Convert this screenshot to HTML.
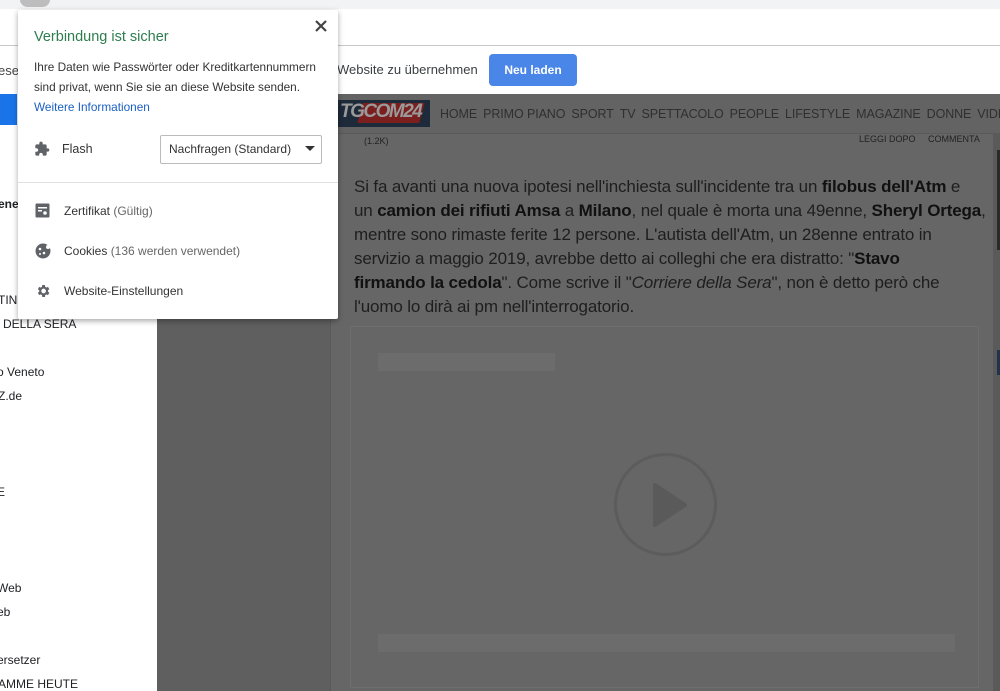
<!DOCTYPE html>
<html><head><meta charset="utf-8"><style>
*{margin:0;padding:0;box-sizing:border-box}
body{width:1000px;height:691px;overflow:hidden;position:relative;font-family:"Liberation Sans",sans-serif;background:#fff}
.a{position:absolute}
.sb{font-size:12px;color:#202124;white-space:nowrap}
.nav span{margin-right:6px}
.p{font-family:"Liberation Sans",sans-serif;font-size:17px;line-height:24px;color:#1e1e1e;letter-spacing:-0.15px;white-space:nowrap}
.p b{color:#111}
.pop{font-family:"Liberation Sans",sans-serif}
</style></head><body>
<div class="a" style="left:0;top:0;width:1000px;height:9px;background:#f1f3f4"></div>
<div class="a" style="left:20px;top:-8px;width:30px;height:15px;border-radius:8px;background:#bdbdbd"></div>
<div class="a" style="left:0;top:45px;width:1000px;height:1px;background:#c8c8c8"></div>
<div class="a sb" style="left:-2px;top:63px;font-size:13px;color:#444">ese</div>
<div class="a" style="left:337px;top:62px;font-size:13px;color:#3c4043">Website zu übernehmen</div>
<div class="a" style="left:489px;top:54px;width:88px;height:32px;background:#4a86e8;border-radius:4px;color:#fff;font-size:12px;font-weight:bold;text-align:center;line-height:32px">Neu laden</div>
<div class="a" style="left:0;top:94px;width:157px;height:597px;background:#fff"></div>
<div class="a" style="left:0;top:94px;width:17px;height:31px;background:#1a73e8"></div>
<div class="a sb" style="left:-2px;top:197px;font-weight:bold">ene</div>
<div class="a sb" style="left:-2px;top:293px">TINO</div>
<div class="a sb" style="left:3px;top:317px">DELLA SERA</div>
<div class="a sb" style="left:-3px;top:365px">o Veneto</div>
<div class="a sb" style="left:-2px;top:389px">Z.de</div>
<div class="a sb" style="left:-3px;top:485px">E</div>
<div class="a sb" style="left:-3px;top:581px">Web</div>
<div class="a sb" style="left:-3px;top:605px">eb</div>
<div class="a sb" style="left:-3px;top:653px">ersetzer</div>
<div class="a sb" style="left:-2px;top:677px">AMME HEUTE</div>
<div class="a" style="left:157px;top:94px;width:843px;height:597px;background:#5f5f5f"></div>
<div class="a" style="left:330px;top:94px;width:663px;height:597px;background:#666;border-left:1px solid #595959"></div>
<div class="a" style="left:993px;top:94px;width:7px;height:597px;background:#5a5a5a"></div>
<div class="a" style="left:997px;top:150px;width:3px;height:100px;background:#2a2a2a"></div>
<div class="a" style="left:997px;top:350px;width:3px;height:25px;background:#23324a"></div>
<div class="a" style="left:330px;top:94px;width:670px;height:40px;background:#636363;border-bottom:1px solid #5a5a5a;overflow:hidden">
 <div class="a" style="left:7px;top:6px;width:93px;height:27px;background:#1d2a3a"></div>
 <div class="a" style="left:30px;top:9px;width:62px;height:20px;background:#7a1e1e;transform:skewX(-15deg)"></div>
 <div class="a" style="left:10px;top:7px;font-size:19px;font-weight:bold;font-style:italic;color:#9a9a9a;letter-spacing:-1.5px">TGCOM24</div>
 <div class="a nav" style="left:110px;top:13px;font-size:12.5px;letter-spacing:-0.1px;color:#2f2f2f;white-space:nowrap"><span>HOME</span><span>PRIMO PIANO</span><span>SPORT</span><span>TV</span><span>SPETTACOLO</span><span>PEOPLE</span><span>LIFESTYLE</span><span>MAGAZINE</span><span>DONNE</span><span>VIDEO</span></div>
</div>
<div class="a" style="left:364px;top:136px;font-size:9px;color:#222">(1.2K)</div>
<div class="a" style="left:859px;top:134px;font-size:9px;color:#222;white-space:nowrap">LEGGI DOPO &nbsp; &nbsp; COMMENTA</div>
<div class="a p" style="left:354px;top:175px;width:630px">Si fa avanti una nuova ipotesi nell'inchiesta sull'incidente tra un <b>filobus dell'Atm</b> e<br>un <b>camion dei rifiuti Amsa</b> a <b>Milano</b>, nel quale è morta una 49enne, <b>Sheryl Ortega</b>,<br>mentre sono rimaste ferite 12 persone. L'autista dell'Atm, un 28enne entrato in<br>servizio a maggio 2019, avrebbe detto ai colleghi che era distratto: "<b>Stavo</b><br><b>firmando la cedola</b>". Come scrive il "<i>Corriere della Sera</i>", non è detto però che<br>l'uomo lo dirà ai pm nell'interrogatorio.</div>
<div class="a" style="left:350px;top:326px;width:629px;height:362px;border:1px solid #6e6e6e;background:#666"></div>
<div class="a" style="left:378px;top:353px;width:177px;height:18px;background:#6c6c6c"></div>
<div class="a" style="left:378px;top:634px;width:577px;height:18px;background:#6c6c6c"></div>
<div class="a" style="left:614px;top:453px;width:103px;height:103px;border:3px solid #5c5c5c;border-radius:50%"></div>
<svg class="a" style="left:650px;top:480px" width="40" height="50"><polygon points="5,5 35,25 5,45" fill="#5a5a5a" stroke="#5a5a5a" stroke-linejoin="round" stroke-width="4"/></svg>
<div class="a pop" style="left:18px;top:10px;width:320px;height:309px;background:#fff;border-radius:2px;box-shadow:0 2px 6px rgba(0,0,0,.35)">
  <svg class="a" style="left:297px;top:10px" width="12" height="12"><path d="M1 1L11 11M11 1L1 11" stroke="#444" stroke-width="2.2"/></svg>
  <div class="a" style="left:16px;top:19px;font-size:14.5px;color:#2e7d4f">Verbindung ist sicher</div>
  <div class="a" style="left:16px;top:47px;font-size:11.8px;line-height:20px;color:#333;width:304px;white-space:nowrap">Ihre Daten wie Passwörter oder Kreditkartennummern<br>sind privat, wenn Sie sie an diese Website senden.<br><span style="color:#1a5fc4">Weitere Informationen</span></div>
  <svg class="a" style="left:16px;top:131px" width="16" height="16" viewBox="0 0 24 24"><path fill="#5f6368" d="M20.5 11H19V7c0-1.1-.9-2-2-2h-4V3.5a2.5 2.5 0 0 0-5 0V5H4c-1.1 0-2 .9-2 2v3.8h1.5a2.7 2.7 0 0 1 0 5.4H2V20c0 1.1.9 2 2 2h3.8v-1.5a2.7 2.7 0 0 1 5.4 0V22H17c1.1 0 2-.9 2-2v-4h1.5a2.5 2.5 0 0 0 0-5z"/></svg>
  <div class="a" style="left:44px;top:132px;font-size:12.5px;color:#333">Flash</div>
  <div class="a" style="left:142px;top:125px;width:162px;height:29px;border:1px solid #bbb;border-radius:2px;font-size:12px;color:#333;line-height:27px;padding-left:8px">Nachfragen (Standard)</div>
  <svg class="a" style="left:287px;top:136px" width="10" height="6"><path d="M0 0h10L5 5z" fill="#333"/></svg>
  <div class="a" style="left:0;top:172px;width:320px;height:1px;background:#e0e0e0"></div>
  <svg class="a" style="left:17px;top:193px" width="15" height="15" viewBox="0 0 15 15"><rect x="0.5" y="0.5" width="14" height="14" rx="1" fill="#5f6368"/><rect x="3" y="4" width="9" height="1.5" fill="#fff"/><rect x="3" y="7" width="4" height="1.5" fill="#fff"/><circle cx="10" cy="10" r="1.8" fill="#fff"/></svg>
  <div class="a" style="left:46px;top:194px;font-size:12px;color:#333">Zertifikat <span style="color:#666">(Gültig)</span></div>
  <svg class="a" style="left:17px;top:233px" width="16" height="16" viewBox="0 0 16 16"><circle cx="8" cy="8" r="7.5" fill="#5f6368"/><circle cx="5" cy="6" r="1.3" fill="#fff"/><circle cx="9" cy="10" r="1.3" fill="#fff"/><circle cx="5" cy="11" r="1" fill="#fff"/><circle cx="13" cy="4" r="2" fill="#fff"/></svg>
  <div class="a" style="left:46px;top:234px;font-size:12px;color:#333">Cookies <span style="color:#666">(136 werden verwendet)</span></div>
  <svg class="a" style="left:17px;top:273px" width="16" height="16" viewBox="0 0 24 24"><path fill="#5f6368" d="M19.4 13a7.5 7.5 0 0 0 0-2l2.1-1.6-2-3.5-2.5 1a7 7 0 0 0-1.7-1L14.9 3h-4l-.4 2.9a7 7 0 0 0-1.7 1l-2.5-1-2 3.5L6.4 11a7.5 7.5 0 0 0 0 2l-2.1 1.6 2 3.5 2.5-1a7 7 0 0 0 1.7 1l.4 2.9h4l.4-2.9a7 7 0 0 0 1.7-1l2.5 1 2-3.5zM12.9 15.5a3.5 3.5 0 1 1 0-7 3.5 3.5 0 0 1 0 7z"/></svg>
  <div class="a" style="left:46px;top:274px;font-size:12px;color:#333">Website-Einstellungen</div>
</div>
</body></html>
